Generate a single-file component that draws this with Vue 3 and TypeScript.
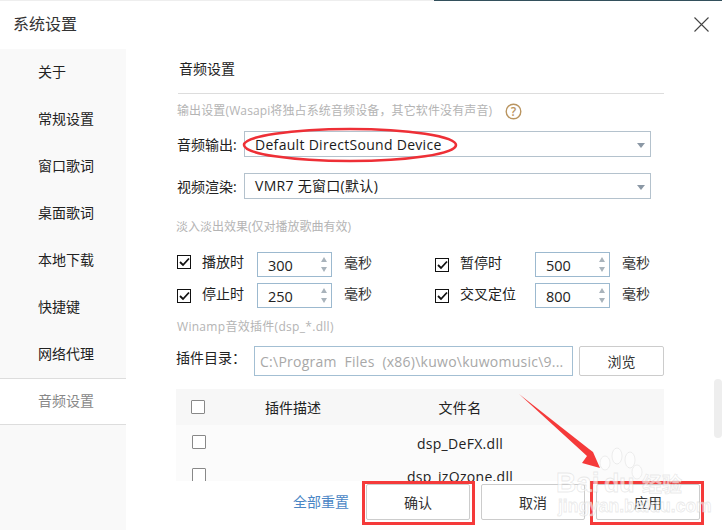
<script setup lang="ts">
const navItems: string[] = ['关于', '常规设置', '窗口歌词', '桌面歌词', '本地下载', '快捷键', '网络代理', '音频设置']
const fades = [
  { left: '播放时', leftVal: 300, right: '暂停时', rightVal: 500, raised: true },
  { left: '停止时', leftVal: 250, right: '交叉定位', rightVal: 800, raised: false },
]
const files: string[] = ['dsp_DeFX.dll', 'dsp_jzOzone.dll']
</script>

<template>
  <div class="window">
    <div class="topstrip"><span class="strip-light"></span><span class="strip-dark"></span></div>
    <header class="titlebar">
      <span class="title">系统设置</span>
      <svg class="close" width="15" height="15" viewBox="0 0 15 15"><path d="M0.5 0.5 L14.5 14.5 M14.5 0.5 L0.5 14.5" stroke="#444" stroke-width="1.1" fill="none" /></svg>
    </header>
    <div class="body">
      <nav class="nav">
        <div v-for="(n, i) in navItems" :key="n" class="nav-item" :class="{ active: i === navItems.length - 1 }">{{ n }}</div>
      </nav>
      <main class="main">
        <div class="panel">
          <h2 class="heading">音频设置</h2>
          <div class="hint first"><span class="hint-text">输出设置(Wasapi将独占系统音频设备，其它软件没有声音)</span>
            <svg class="help" width="17" height="17" viewBox="0 0 17 17"><circle cx="8.5" cy="8.5" r="7.3" stroke="#b9945f" stroke-width="1.4" fill="none" /><text x="8.5" y="12.6" text-anchor="middle" font-size="12" font-weight="600" fill="#b9945f" font-family="Open Sans">?</text></svg>
          </div>
          <div class="field">
            <label class="flabel">音频输出:</label>
            <div class="select">Default DirectSound Device<i class="caret"></i></div>
          </div>
          <div class="field second">
            <label class="flabel">视频渲染:</label>
            <div class="select">VMR7 无窗口(默认)<i class="caret"></i></div>
          </div>
          <div class="hint fade">淡入淡出效果(仅对播放歌曲有效)</div>
          <div class="fades">
            <div v-for="f in fades" :key="f.left" class="fade-row">
              <div class="fade-cell">
                <span class="check" :class="{ raised: f.raised }"><svg width="11" height="10" viewBox="0 0 11 10"><path d="M1 5 L4 8 L10 1.5" stroke="#111" stroke-width="1.8" fill="none" /></svg></span>
                <span class="fade-label" :class="{ raised: f.raised }">{{ f.left }}</span>
                <div class="spin">{{ f.leftVal }}<i class="up"></i><i class="down"></i></div>
                <span class="ms">毫秒</span>
              </div>
              <div class="fade-cell">
                <span class="check"><svg width="11" height="10" viewBox="0 0 11 10"><path d="M1 5 L4 8 L10 1.5" stroke="#111" stroke-width="1.8" fill="none" /></svg></span>
                <span class="fade-label wide">{{ f.right }}</span>
                <div class="spin">{{ f.rightVal }}<i class="up"></i><i class="down"></i></div>
                <span class="ms">毫秒</span>
              </div>
            </div>
          </div>
          <div class="hint winamp">Winamp音效插件(dsp_*.dll)</div>
          <div class="dir">
            <label class="dlabel">插件目录：</label>
            <div class="dinput">C:\Program&nbsp; Files&nbsp; (x86)\kuwo\kuwomusic\9...</div>
            <button class="browse">浏览</button>
          </div>
          <div class="table">
            <div class="thead">
              <span class="box"></span>
              <span class="col-desc">插件描述</span>
              <span class="col-file">文件名</span>
            </div>
            <div v-for="f in files" :key="f" class="trow">
              <span class="box"></span>
              <span class="col-desc"></span>
              <span class="col-file">{{ f }}</span>
            </div>
          </div>
        </div>
        <div class="scrollbar"></div>
        <footer class="footer">
          <a class="reset">全部重置</a>
          <button class="btn">确认</button>
          <button class="btn">取消</button>
          <button class="btn">应用</button>
        </footer>
      </main>
    </div>

    <svg class="overlay" width="725" height="530" viewBox="0 0 725 530">
      <ellipse cx="350" cy="145" rx="106" ry="16" fill="none" stroke="#ee2f36" stroke-width="2.6" />
      <rect x="363.5" y="482.5" width="110" height="41" fill="none" stroke="#f53a3a" stroke-width="3" />
      <rect x="591.5" y="482.5" width="111" height="41" fill="none" stroke="#f53a3a" stroke-width="3" />
      <path d="M519 394 L589 449 L593 452 L600 468 L582 463 L587 456 Z" fill="#f53a3a" />
      <g fill="#fff" fill-opacity="0.6" stroke="#c9c9c9" stroke-opacity="0.4" stroke-width="0.8">
        <ellipse cx="605" cy="463" rx="5" ry="7" />
        <ellipse cx="617" cy="456" rx="5" ry="8" />
        <ellipse cx="630" cy="460" rx="5" ry="8" />
        <ellipse cx="637" cy="472" rx="5" ry="7" />
        <text x="556" y="492" font-size="28" font-weight="700" font-family="Liberation Sans">Bai</text>
        <text x="604" y="492" font-size="25" font-weight="700" font-family="Liberation Sans">du</text>
        <text x="642" y="492" font-size="20" font-weight="700" font-family="Noto Sans CJK SC">经验</text>
        <text x="558" y="512" font-size="17.5" font-weight="700" font-family="Liberation Sans">jingyan.baidu.com</text>
      </g>
    </svg>
  </div>
</template>

<style>
html, body { margin: 0; background: #fff; }
</style>

<style scoped>
.window {
  position: relative;
  width: 725px;
  height: 530px;
  overflow: hidden;
  background: #fff;
  color: #222;
  font-family: "Open Sans", "Noto Sans CJK SC", sans-serif;
  font-size: 14px;
  display: flex;
  flex-direction: column;
}
.topstrip { display: flex; height: 1px; flex: none; }
.strip-light { width: 434px; background: #eee; }
.strip-dark { width: 288px; background: #33505c; }
.titlebar {
  height: 48px;
  padding: 0 16px 0 13px;
  display: flex;
  align-items: center;
  justify-content: space-between;
  flex: none;
}
.title { font-size: 16px; color: #333; margin-bottom: 4px; }
.close { margin-bottom: 2px; }
.body { flex: 1; display: flex; min-height: 0; }
.nav { width: 126px; background: #f9f9f9; flex: none; }
.nav-item { height: 47px; line-height: 46px; padding-left: 38px; color: #222; box-sizing: border-box; }
.nav-item.active { background: #fff; color: #888; border-top: 1px solid #ddd; border-bottom: 1px solid #ddd; line-height: 44px; }
.main { flex: 1; display: flex; flex-direction: column; position: relative; min-width: 0; }
.panel { height: 432px; overflow: hidden; padding-left: 50px; width: 488px; flex: none; }
.heading {
  margin: 0 0 0 2px;
  font-size: 14px;
  font-weight: 400;
  line-height: 20px;
  padding: 10px 0 0 1px;
  height: 45px;
  box-sizing: border-box;
  border-bottom: 1px solid #ddd;
}
.hint { color: #b4b4b4; font-size: 12px; line-height: 18px; }
.hint.first { margin-top: 8px; margin-left: 1px; display: flex; align-items: center; white-space: nowrap; }
.hint-text { letter-spacing: 0.12px; }
.help { margin-left: 13px; }
.field { display: flex; align-items: center; margin-top: 11px; margin-left: 1px; }
.field.second { margin-top: 16px; }
.flabel { width: 67px; flex: none; }
.select {
  position: relative;
  width: 407px;
  height: 26px;
  line-height: 25px;
  padding-left: 10px;
  box-sizing: border-box;
  border: 1px solid #b4c2cd;
  color: #1a1a1a;
  white-space: nowrap;
  letter-spacing: 0.3px;
}
.field.second .select { line-height: 23px; }
.caret {
  position: absolute;
  right: 5px;
  top: 11px;
  border: 4px solid transparent;
  border-top: 5px solid #8b98a5;
  border-bottom: 0;
}
.hint.fade { margin-top: 19px; }
.fades { margin-top: 13px; }
.fade-row { display: flex; height: 31px; align-items: center; margin-left: 1px; }
.fade-cell { display: flex; align-items: center; width: 258px; flex: none; }
.check {
  width: 14px;
  height: 14px;
  box-sizing: border-box;
  border: 1px solid #111;
  background: #fff;
  display: flex;
  align-items: center;
  justify-content: center;
  flex: none;
}
.check.raised { margin-bottom: 6px; }
.fade-label { width: 55px; margin-left: 11px; flex: none; margin-bottom: 5px; }
.fade-label.raised { margin-bottom: 8px; }
.fade-label.wide { width: 75px; }
.spin {
  position: relative;
  width: 75px;
  height: 25px;
  line-height: 25px;
  box-sizing: border-box;
  border: 1px solid #9cb9cf;
  padding-left: 10px;
  flex: none;
  font-size: 14.5px;
}
.up, .down { position: absolute; right: 4px; border: 3.5px solid transparent; }
.up { top: 4px; border-bottom: 5px solid #a9b3bb; border-top: 0; }
.down { bottom: 4px; border-top: 5px solid #a9b3bb; border-bottom: 0; }
.ms { margin-left: 12px; color: #333; margin-bottom: 5px; }
.hint.winamp { margin-top: 7px; margin-left: 1px; letter-spacing: 0.3px; }
.dir { display: flex; align-items: center; margin-top: 10px; }
.dlabel { width: 78px; flex: none; margin-bottom: 8px; }
.dinput {
  width: 319px;
  height: 30px;
  line-height: 29px;
  padding-left: 5px;
  box-sizing: border-box;
  border: 1px solid #a3bfd3;
  color: #a8a8a8;
  white-space: nowrap;
  overflow: hidden;
  flex: none;
  letter-spacing: 0.25px;
}
.browse {
  margin-left: 6px;
  width: 85px;
  height: 30px;
  background: #fff;
  border: 1px solid #ccc;
  border-radius: 2px;
  font: inherit;
  color: #333;
}
.table { margin-top: 13px; background: #fbfbfb; width: 488px; }
.thead, .trow { display: flex; align-items: center; }
.thead { height: 36px; background: #f7f7f7; }
.trow { height: 33px; }
.box { width: 14px; height: 14px; box-sizing: border-box; border: 1px solid #888; margin-left: 15px; flex: none; background: #fff; border-radius: 1px; }
.trow .box { margin-left: 16px; }
.col-desc { width: 56px; margin-left: 60px; flex: none; }
.trow .col-desc { margin-left: 59px; }
.col-file { width: 200px; margin-left: 39px; text-align: center; white-space: nowrap; flex: none; margin-top: 3px; letter-spacing: 0.3px; }
.thead .col-file { margin-top: 0; }
.scrollbar {
  position: absolute;
  left: 588px;
  top: 330px;
  width: 8px;
  height: 59px;
  border-radius: 4px;
  background: #eee;
}
.footer { display: flex; align-items: center; padding-left: 167px; margin-top: 3px; }
.reset { color: #4a86c5; width: 73px; flex: none; margin-bottom: 2px; }
.btn {
  width: 104px;
  height: 36px;
  margin-right: 11px;
  background: #fff;
  border: 1px solid #ccc;
  border-radius: 2px;
  font: inherit;
  color: #333;
  flex: none;
}
.overlay { position: absolute; left: 0; top: 0; pointer-events: none; }
</style>
